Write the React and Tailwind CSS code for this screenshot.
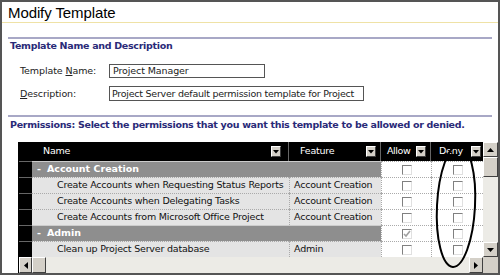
import React from 'react';

const rows = [
  { group: true, name: 'Account Creation' },
  { name: 'Create Accounts when Requesting Status Reports', feature: 'Account Creation' },
  { name: 'Create Accounts when Delegating Tasks', feature: 'Account Creation' },
  { name: 'Create Accounts from Microsoft Office Project', feature: 'Account Creation' },
  { group: true, name: 'Admin', allowChecked: true },
  { name: 'Clean up Project Server database', feature: 'Admin' },
];

const cols = 'grid grid-cols-[13px_257px_92px_50px_52px]';

function FilterBtn() {
  return (
    <span className="flex h-[11px] w-[10px] shrink-0 items-center justify-center border border-t-white border-l-white border-b-[#404040] border-r-[#404040] bg-[#d4d0c8]">
      <svg width="6" height="4" viewBox="0 0 6 4"><path d="M0 0h6L3 3.5z" fill="#000" /></svg>
    </span>
  );
}

function Check({ checked }) {
  return (
    <span className="flex h-[10px] w-[10px] items-center justify-center border border-t-[#808080] border-l-[#808080] border-b-[#e0e0e0] border-r-[#e0e0e0] bg-white">
      {checked && (
        <svg width="8" height="8" viewBox="0 0 8 8"><path d="M1 4l2 2 4-5" stroke="#a0a0a0" strokeWidth="1.6" fill="none" /></svg>
      )}
    </span>
  );
}

function Arrow({ dir }) {
  const d = { up: 'M0 4h7L3.5 0z', down: 'M0 0h7L3.5 4z', left: 'M4 0v7L0 3.5z', right: 'M0 0v7L4 3.5z' }[dir];
  const vertical = dir === 'up' || dir === 'down';
  return (
    <svg width={vertical ? 7 : 4} height={vertical ? 4 : 7} viewBox={vertical ? '0 0 7 4' : '0 0 4 7'}>
      <path d={d} fill="#000" />
    </svg>
  );
}

const btn = 'flex items-center justify-center bg-[#d4d0c8] border border-t-white border-l-white border-b-[#404040] border-r-[#404040]';

export default function App() {
  return (
    <div className="relative h-[277px] w-[500px] overflow-hidden bg-white font-['DejaVu_Sans',sans-serif]">
      <div className="flex h-[275px] w-[500px] flex-col border-2 border-[#555]">
        <div className="h-[21px] border-b border-[#efe2a6] pl-[6px] pt-[1px] font-['Liberation_Sans',Arial,sans-serif] text-[15px] leading-[19px] tracking-[-0.1px] text-black">
          Modify Template
        </div>
        <div className="mx-[6px] mt-[14px] h-[2px] bg-[#a8a8c6]" />
        <div className="h-[14px] pl-[8px] text-[9.5px] font-bold leading-[14px] tracking-[-0.3px] text-[#2a2a78]">
          Template Name and Description
        </div>
        <div className="mt-[11px] flex items-center whitespace-nowrap pl-[18px] text-[9.5px] tracking-[-0.1px] text-[#222]">
          <span className="w-[89px]">Template <u>N</u>ame:</span>
          <span className="h-[14px] w-[156px] overflow-hidden border border-[#555] pl-[3px] leading-[12px]">Project Manager</span>
        </div>
        <div className="mt-[8px] flex items-center whitespace-nowrap pl-[18px] text-[9.5px] tracking-[-0.1px] text-[#222]">
          <span className="w-[89px]"><u>D</u>escription:</span>
          <span className="h-[15px] w-[255px] overflow-hidden border border-[#555] pl-[2px] leading-[13px] tracking-[-0.25px]">Project Server default permission template for Project</span>
        </div>
        <div className="mx-[6px] mt-[14px] h-[2px] bg-[#a8a8c6]" />
        <div className="mt-[1px] h-[14px] whitespace-nowrap pl-[8px] text-[9.5px] font-bold leading-[14px] tracking-[-0.3px] text-[#2a2a78]">
          Permissions: Select the permissions that you want this template to be allowed or denied.
        </div>
        <div className="ml-[16px] mt-[10px] flex flex-col whitespace-nowrap text-[9.5px] tracking-[-0.2px]">
          <div className="flex">
            <div className="flex flex-col border-l border-black">
              <div className={`${cols} h-[19px] bg-black text-white`}>
                <div />
                <div className="flex items-center justify-between border-r border-[#666] pl-[11px] pr-[7px]">Name<FilterBtn /></div>
                <div className="flex items-center justify-between border-r border-[#666] pl-[11px] pr-[4px]">Feature<FilterBtn /></div>
                <div className="flex items-center justify-between border-r border-[#666] pl-[6px] pr-[4px] tracking-[-0.4px]">Allow<FilterBtn /></div>
                <div className="flex items-center justify-between pl-[8px] pr-[2px]">Deny<FilterBtn /></div>
              </div>
              {rows.map((r) => (
                <div key={r.name} className={`${cols} h-[16px]`}>
                  <div className="border-t border-[#666] bg-black" />
                  {r.group ? (
                    <div className="col-span-2 flex items-center gap-[6px] border-t border-[#ccc] bg-[#8e8e8e] pl-[5px] font-bold tracking-[0px] text-white">
                      <span>-</span>{r.name}
                    </div>
                  ) : (
                    <>
                      <div className="flex items-center overflow-hidden border-t border-dotted border-[#aaa] bg-[#e4e4e4] pl-[25px] text-[#111]">{r.name}</div>
                      <div className="flex items-center overflow-hidden border-t border-l border-dotted border-[#aaa] bg-[#e4e4e4] pl-[4px] text-[#111]">{r.feature}</div>
                    </>
                  )}
                  <div className="flex items-center justify-center border-t border-l border-dotted border-[#aaa] bg-white"><Check checked={r.allowChecked} /></div>
                  <div className="flex items-center justify-center border-t border-l border-dotted border-[#aaa] bg-white"><Check /></div>
                </div>
              ))}
            </div>
            <div className="flex w-[15px] flex-col bg-[#ecebe6]">
              <div className={`${btn} h-[15px]`}><Arrow dir="up" /></div>
              <div className={`${btn} h-[20px]`} />
              <div className="flex-1" />
              <div className={`${btn} h-[15px]`}><Arrow dir="down" /></div>
            </div>
          </div>
          <div className="flex h-[16px] border-l border-black bg-[#ecebe6]">
            <div className={`${btn} w-[13px]`}><Arrow dir="left" /></div>
            <div className={`${btn} w-[14px]`} />
            <div className="flex-1" />
            <div className={`${btn} w-[14px]`}><Arrow dir="right" /></div>
            <div className="w-[15px] bg-[#d4d0c8]" />
          </div>
        </div>
      </div>
      <svg className="pointer-events-none absolute left-0 top-0" width="500" height="277">
        <ellipse cx="456" cy="206" rx="19" ry="61" transform="rotate(3 456 206)" fill="none" stroke="#000" strokeWidth="2" />
      </svg>
    </div>
  );
}
